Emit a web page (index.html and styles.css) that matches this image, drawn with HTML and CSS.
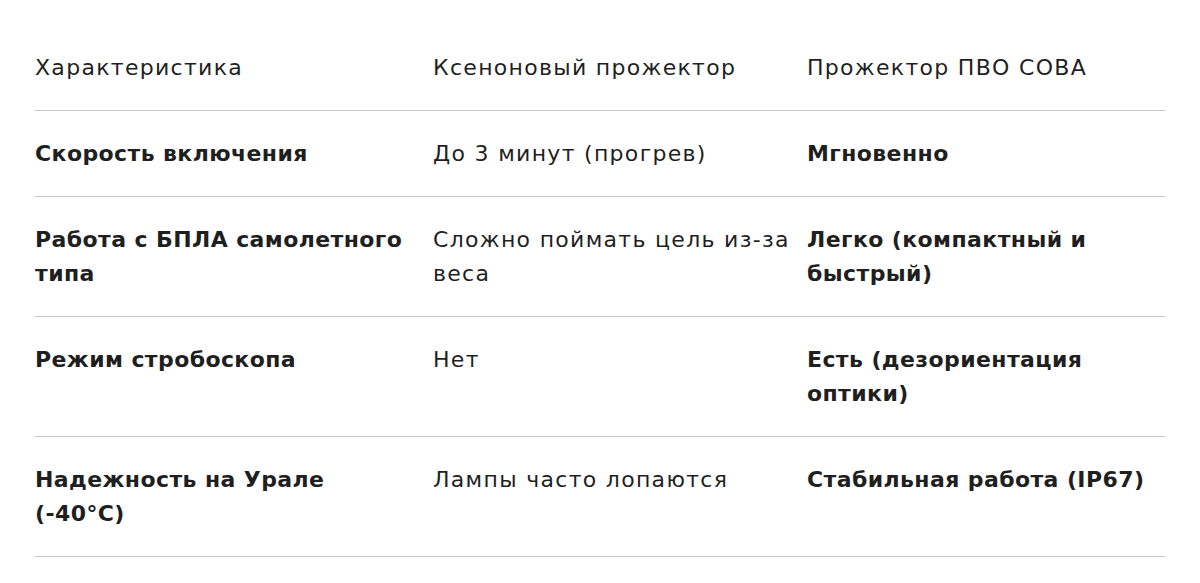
FILE: index.html
```html
<!DOCTYPE html>
<html lang="ru">
<head>
<meta charset="utf-8">
<link rel="stylesheet" href="styles.css">
</head>
<body>
<div class="table">
  <div class="row head">
    <div class="cell">Характеристика</div>
    <div class="cell">Ксеноновый прожектор</div>
    <div class="cell">Прожектор ПВО СОВА</div>
  </div>
  <div class="row">
    <div class="cell b">Скорость включения</div>
    <div class="cell">До 3 минут (прогрев)</div>
    <div class="cell b">Мгновенно</div>
  </div>
  <div class="row">
    <div class="cell b">Работа с БПЛА самолетного типа</div>
    <div class="cell">Сложно поймать цель <span class="nw">из-за</span> веса</div>
    <div class="cell b">Легко (компактный и быстрый)</div>
  </div>
  <div class="row">
    <div class="cell b">Режим стробоскопа</div>
    <div class="cell">Нет</div>
    <div class="cell b">Есть (дезориентация оптики)</div>
  </div>
  <div class="row">
    <div class="cell b">Надежность на Урале (-40°C)</div>
    <div class="cell">Лампы часто лопаются</div>
    <div class="cell b">Стабильная работа (IP67)</div>
  </div>
</div>
</body>
</html>
```
FILE: styles.css
```css
html, body {
  margin: 0;
  padding: 0;
  background: #ffffff;
}
body {
  font-family: "DejaVu Sans", sans-serif;
  font-size: 22px;
  line-height: 34px;
  letter-spacing: 1.3px;
  color: #1f1f1f;
  padding: 25px 0 0 35px;
}
.table {
  width: 1130px;
}
.row {
  display: grid;
  grid-template-columns: 398px 374px 358px;
  border-bottom: 1px solid #c7c7c7;
}
.cell {
  padding: 26px 18px 25px 0;
}
.cell:nth-child(2) {
  padding-right: 8px;
}
.nw {
  white-space: nowrap;
}
.b {
  font-weight: 700;
  letter-spacing: 0.4px;
}
```
